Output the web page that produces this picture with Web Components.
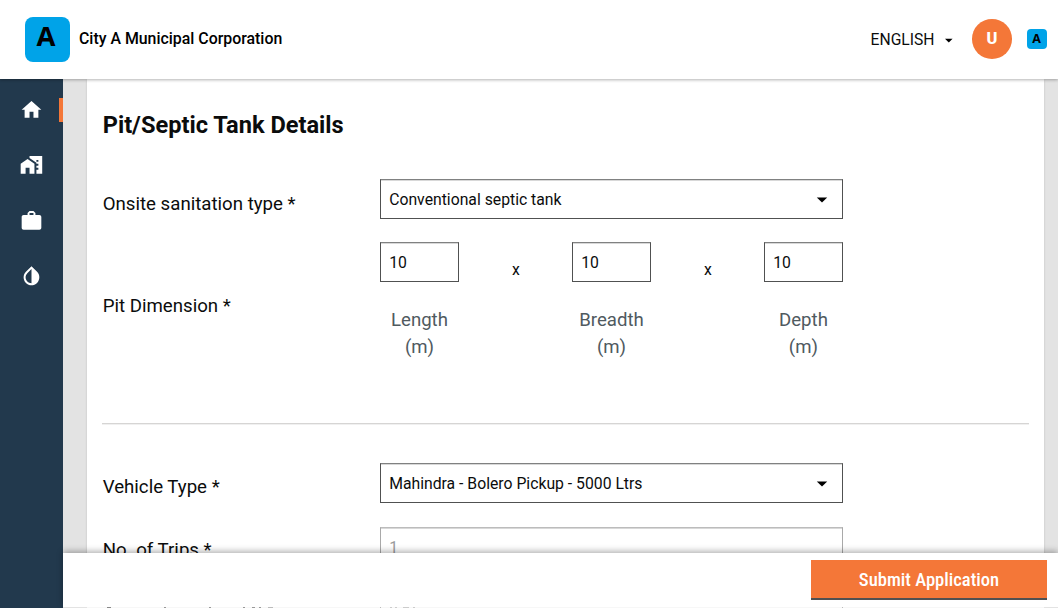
<!DOCTYPE html>
<html lang="en">
<head>
<meta charset="utf-8">
<title>City A Municipal Corporation</title>
<style>
html,body{margin:0;height:100%;overflow:hidden}
body{font-family:Roboto,"Liberation Sans",sans-serif;color:#0b0c0c;background:#e3e3e3}
</style>
</head>
<body>
<app-shell></app-shell>
<script>
const define=(name,html)=>customElements.define(name,class extends HTMLElement{
  constructor(){
    super();
    const t=document.createElement('template');
    t.innerHTML=html;
    this.attachShadow({mode:'open'}).append(t.content.cloneNode(true));
  }
});

define('city-logo',`
<style>
:host{display:flex;box-sizing:border-box;align-items:center;justify-content:center;width:var(--size);height:var(--size);border-radius:var(--radius);background:#00a3e8;color:#000;font:700 var(--letter)/1 "Open Sans",sans-serif}
span{transform:translate(var(--shift,0px),var(--lift,0px))}
</style><span>A</span>`);

define('top-bar',`
<style>
:host{display:flex;align-items:center;box-sizing:border-box;height:79px;padding:0 11px 1px 25px;background:#fff;box-shadow:0 1px 3px rgba(0,0,0,.3);position:relative;z-index:3}
.brand{--size:45px;--radius:8px;--letter:27.5px;--lift:-3px;--shift:-1.5px}
h1{margin:0 auto 0 9px;font-size:15.88px;font-weight:500;line-height:20px;color:#000}
.lang{display:flex;align-items:center;font-size:15.68px;line-height:20px;font-weight:400;color:#0b0c0c;padding-top:2px}
.lang svg{margin:0 18.5px 0 9px}
.avatar{width:40px;height:39.4px;border-radius:50%;background:#f47738;color:#fff;display:flex;align-items:center;justify-content:center;font-size:16.5px;font-weight:800;line-height:20px;margin-right:15px}
.small{--size:20px;--radius:4px;--letter:12.5px;--lift:-.5px;--shift:-.5px}
</style>
<city-logo class="brand"></city-logo>
<h1>City A Municipal Corporation</h1>
<div class="lang">ENGLISH<svg width="10" height="5" viewBox="0 0 10 5"><path d="M1 0.7h7.6L4.8 4.5z" fill="#000"/></svg></div>
<div class="avatar"><span>U</span></div>
<city-logo class="small"></city-logo>`);

define('nav-item',`
<style>
:host{display:flex;align-items:center;justify-content:center;position:relative;height:23.6px}
:host([active])::after{content:"";position:absolute;right:0;top:0;width:3.8px;height:23.6px;background:#f47738}
::slotted(svg){display:block;width:23.6px;height:23.6px;fill:#fff;transform:translateX(-.3px)}
</style><slot></slot>`);

define('side-nav',`
<style>
:host{display:flex;flex-direction:column;gap:31.6px;box-sizing:border-box;width:63px;padding-top:19.3px;background:#22394d}
</style>
<nav-item active><svg viewBox="0 0 24 24"><path d="M10 20v-6h4v6h5v-8h3L12 3 2 12h3v8z"/></svg></nav-item>
<nav-item><svg viewBox="0 0 24 24"><path d="M1 11v10h5v-6h4v6h5V11L8 6z"/><path d="M10 3v1.97l7 5V11h2v2h-2v2h2v2h-2v4h6V3H10zm9 6h-2V7h2v2z"/></svg></nav-item>
<nav-item><svg viewBox="0 0 24 24"><path d="M20 6h-4V4l-2-2h-4L8 4v2H4c-1.1 0-2 .9-2 2v11c0 1.1.9 2 2 2h16c1.1 0 2-.9 2-2V8c0-1.1-.9-2-2-2zm-6 0h-4V4h4z"/></svg></nav-item>
<nav-item><svg viewBox="0 0 24 24"><path d="M17.66 7.93 12 2.27 6.34 7.93c-3.12 3.12-3.12 8.19 0 11.31C7.9 20.8 9.95 21.58 12 21.58s4.1-.78 5.66-2.34c3.12-3.12 3.12-8.19 0-11.31zM12 19.59c-1.6 0-3.11-.62-4.24-1.76C6.62 16.69 6 15.19 6 13.59s.62-3.11 1.76-4.24L12 5.1z"/></svg></nav-item>`);

define('text-box',`
<style>
:host{display:flex;align-items:center;justify-content:space-between;box-sizing:border-box;height:40px;padding:2px 14px 0 8.2px;border:1px solid #505151;border-top-color:#808181;box-shadow:inset 0 1px #d8d8d8;font-size:15.75px;line-height:20px;color:#0b0c0c;background:#fff}
:host([disabled]){border-color:#a9a9a9;border-top-color:#bcbcbc;color:#9a9b9b}
svg{display:none}
:host([select]) svg{display:block}
</style><slot></slot>
<svg width="12" height="6" viewBox="0 0 12 6"><path d="M.8.6h10.4L6 5.6z" fill="#000"/></svg>`);

define('form-row',`
<style>
:host{display:grid;grid-template-columns:277.3px 463px;align-items:center;margin-bottom:23px}
label{font-size:18.66px;line-height:24px;padding-top:var(--drop,9px);padding-bottom:var(--raise,0px)}
</style>
<label><slot name="label"></slot></label><slot></slot>`);

define('dimension-field',`
<style>
:host{display:block;width:79px}
p{margin:25px 0 0;text-align:center;font-size:18.62px;line-height:27px;color:#505a5f}
</style>
<text-box><slot></slot></text-box><p><slot name="unit"></slot></p>`);

define('dimension-group',`
<style>
:host{display:flex;justify-content:space-between;height:157px}
.by{font-size:15.75px;line-height:20px;margin:18px -1px 0 0}
</style>
<dimension-field>10<span slot="unit">Length (m)</span></dimension-field><span class="by">x</span>
<dimension-field>10<span slot="unit">Breadth (m)</span></dimension-field><span class="by">x</span>
<dimension-field>10<span slot="unit">Depth (m)</span></dimension-field>`);

define('form-card',`
<style>
:host{display:block;box-sizing:border-box;width:957px;height:529px;margin-left:24px;padding:32px 15.5px 0 15.7px;background:#fff;box-shadow:0 1px 2px rgba(0,0,0,.16);overflow:hidden}
h2{margin:0 0 40px;font-size:23.6px;line-height:28px;font-weight:700}
hr{height:1px;border:0;border-bottom:1px solid #f0f0f0;margin:0 0 38px -.7px;background:#d6d5d4}
.pit{--drop:0px;--raise:30px;margin-bottom:24px}
.vehicle{--drop:7px;margin-bottom:24px}
.trips{--drop:5px}
</style>
<h2>Pit/Septic Tank Details</h2>
<form-row><span slot="label">Onsite sanitation type *</span><text-box select>Conventional septic tank</text-box></form-row>
<form-row class="pit"><span slot="label">Pit Dimension *</span><dimension-group></dimension-group></form-row>
<hr>
<form-row class="vehicle"><span slot="label">Vehicle Type *</span><text-box select>Mahindra - Bolero Pickup - 5000 Ltrs</text-box></form-row>
<form-row class="trips"><span slot="label">No. of Trips *</span><text-box disabled>1</text-box></form-row>`);

define('action-bar',`
<style>
:host{display:flex;flex-direction:column;position:absolute;left:63px;right:0;bottom:1px;height:54.4px;box-sizing:border-box;background:#fff;box-shadow:0 -2px 6px rgba(0,0,0,.3);z-index:2}
button{align-self:flex-end;box-sizing:border-box;width:236px;height:39.5px;margin:7.6px 11px 0 0;padding:2px 0 0;border:0;border-bottom:2px solid #505051;background:#f47738;color:#fff;font:500 18.6px/24px Roboto,sans-serif;font-stretch:condensed}
/* upper edge of the next row, showing under the bar */
:host::after{content:"";position:absolute;left:0;top:100%;width:100%;height:1px;background:
linear-gradient(#888,#888) 44px 0/4px 1px no-repeat,
linear-gradient(#999,#999) 101px 0/2px 1px no-repeat,
linear-gradient(#999,#999) 146px 0/2px 1px no-repeat,
linear-gradient(#999,#999) 180px 0/2px 1px no-repeat,
linear-gradient(#999,#999) 189px 0/3px 1px no-repeat,
linear-gradient(#999,#999) 196px 0/2px 1px no-repeat,
linear-gradient(#bbb,#bbb) 205px 0/5px 1px no-repeat,
linear-gradient(#bbb,#bbb) 317px 0/1px 1px no-repeat,
linear-gradient(#ccc,#ccc) 327px 0/2px 1px no-repeat,
linear-gradient(#ccc,#ccc) 332px 0/2px 1px no-repeat,
linear-gradient(#ccc,#ccc) 340px 0/6px 1px no-repeat,
linear-gradient(#ccc,#ccc) 350px 0/2px 1px no-repeat,
linear-gradient(#bbb,#bbb) 779px 0/1px 1px no-repeat,
linear-gradient(#f7f7f7,#f7f7f7) 24px 0/957px 1px no-repeat,#e3e3e3}
</style>
<button>Submit Application</button>`);

define('app-shell',`
<style>
:host{display:flex;flex-direction:column;height:100vh;overflow:hidden;position:relative}
.body{display:flex;flex:1;min-height:0}
side-nav{flex:none}
</style>
<top-bar></top-bar>
<div class="body"><side-nav></side-nav><form-card></form-card></div>
<action-bar></action-bar>`);
</script>
</body>
</html>
